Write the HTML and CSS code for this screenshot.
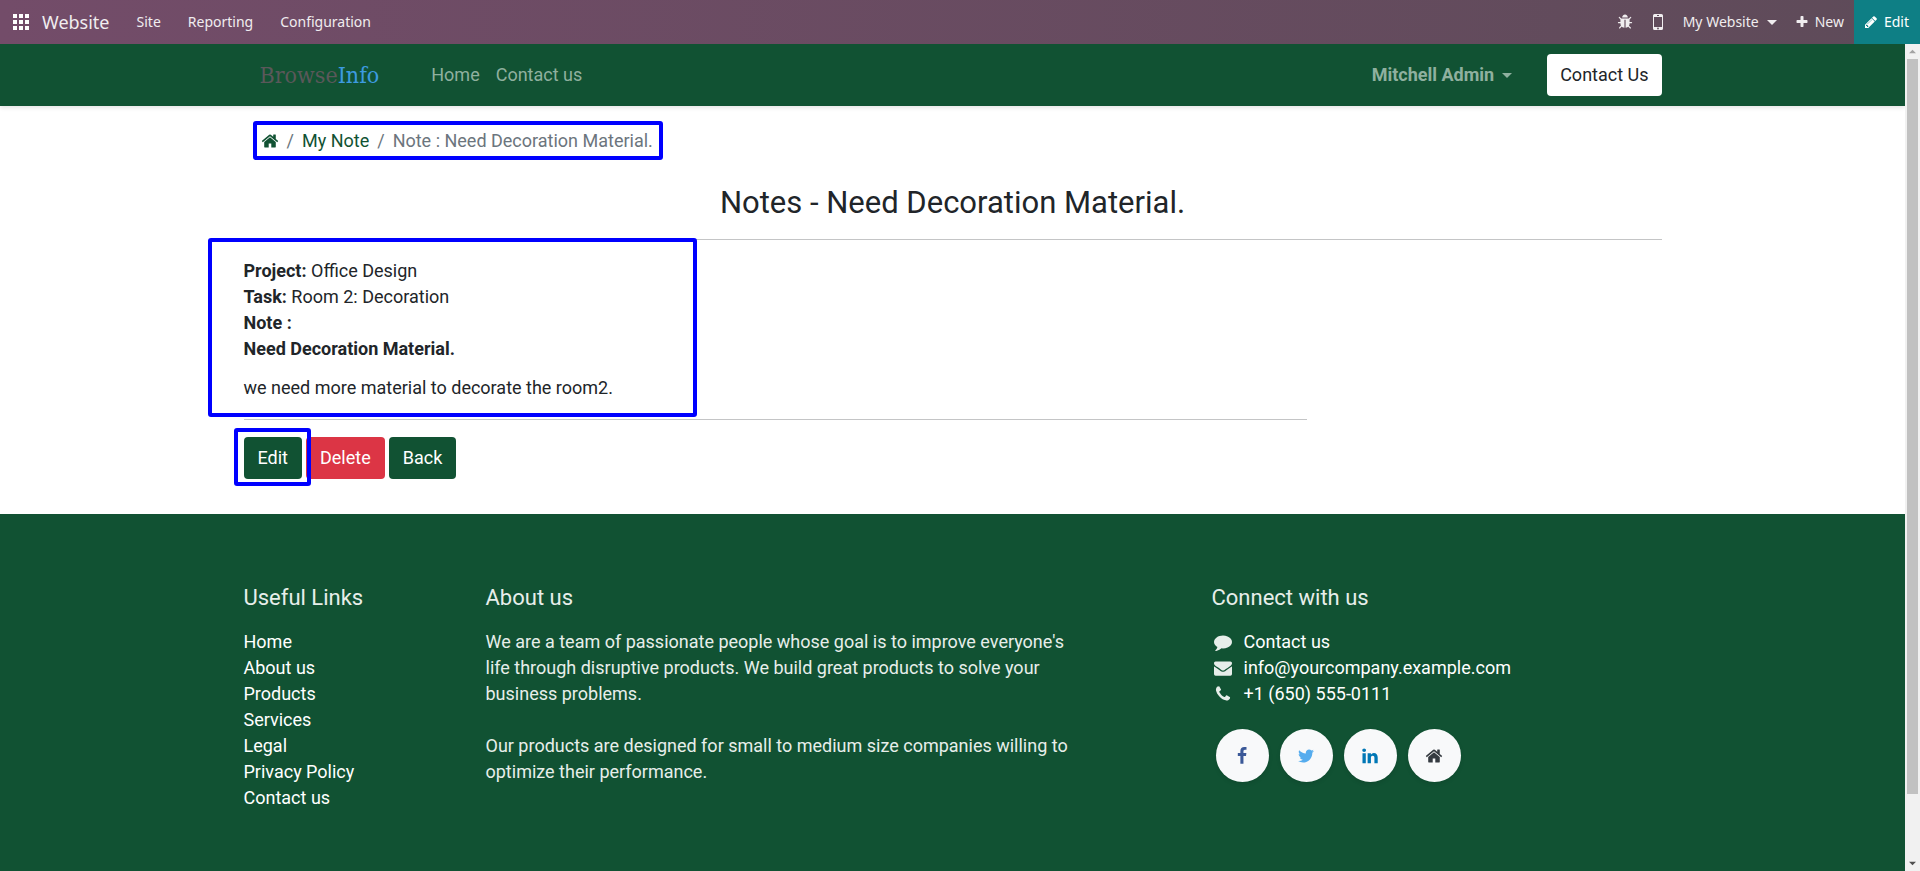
FILE: index.html
```html
<!DOCTYPE html>
<html lang="en">
<head>
<meta charset="utf-8">
<title>Note : Need Decoration Material. | My Website</title>
<link rel="stylesheet" href="styles.css">
</head>
<body>
<svg class="sprite" aria-hidden="true">
  <symbol id="home" viewBox="0 0 1792 1792"><path d="M1472 992v480q0 26-19 45t-45 19h-384v-384h-256v384h-384q-26 0-45-19t-19-45v-480q0-1 .5-3t.5-3l575-474 575 474q1 2 1 6zm223-69l-62 74q-8 9-21 11h-3q-13 0-21-7l-692-577-692 577q-12 8-24 7-13-2-21-11l-62-74q-8-10-7-23.5t11-21.5l719-599q32-26 76-26t76 26l244 204v-195q0-14 9-23t23-9h192q14 0 23 9t9 23v408l219 182q10 8 11 21.5t-7 23.5z"/></symbol>
  <symbol id="bug" viewBox="0 0 1792 1792"><path d="M1696 960q0 26-19 45t-45 19h-224q0 171-67 290l208 209q19 19 19 45t-19 45q-18 19-45 19t-45-19l-198-197q-5 5-15 13t-42 28.5-65 36.5-82 29-97 13v-896h-128v896q-51 0-101.5-13.5t-87-33-66-39-43.5-32.5l-15-14-183 207q-20 21-48 21-24 0-43-16-19-18-20.5-44.5t15.5-46.5l202-227q-58-114-58-274h-224q-26 0-45-19t-19-45 19-45 45-19h224v-294l-173-173q-19-19-19-45t19-45 45-19 45 19l173 173h844l173-173q19-19 45-19t45 19 19 45-19 45l-173 173v294h224q26 0 45 19t19 45zm-480-576h-640q0-133 93.5-226.5t226.5-93.5 226.5 93.5 93.5 226.5z"/></symbol>
  <symbol id="plus" viewBox="0 0 1792 1792"><path d="M1600 736v192q0 40-28 68t-68 28h-416v416q0 40-28 68t-68 28h-192q-40 0-68-28t-28-68v-416h-416q-40 0-68-28t-28-68v-192q0-40 28-68t68-28h416v-416q0-40 28-68t68-28h192q40 0 68 28t28 68v416h416q40 0 68 28t28 68z"/></symbol>
  <symbol id="pencil" viewBox="0 0 1792 1792"><path d="M491 1536l91-91-235-235-91 91v107h128v128h107zm523-928q0-22-22-22-10 0-17 7l-542 542q-7 7-7 17 0 22 22 22 10 0 17-7l542-542q7-7 7-17zm-54-192l416 416-832 832h-416v-416zm683 96q0 53-37 90l-166 166-416-416 166-165q36-38 90-38 53 0 91 38l235 234q37 39 37 91z"/></symbol>
  <symbol id="comment" viewBox="0 0 1792 1792"><path d="M1792 896q0 174-120 321.5t-326 233-450 85.5q-70 0-145-8-198 175-460 242-49 14-114 22-17 2-30.5-9t-17.5-29v-1q-3-4-.5-12t2-10 4.5-9.5l6-9 7-8.5 8-9q7-8 31-34.5t34.5-38 31-39.5 32.5-51 27-59 26-76q-157-89-247.5-220t-90.5-281q0-130 71-248.5t191-204.5 286-136.5 348-50.5q244 0 450 85.5t326 233 120 321.5z"/></symbol>
  <symbol id="envelope" viewBox="0 0 1792 1792"><path d="M1792 710v794q0 66-47 113t-113 47h-1472q-66 0-113-47t-47-113v-794q44 49 101 87 362 246 497 345 57 42 92.5 65.5t94.5 48 110 24.5h2q51 0 110-24.5t94.5-48 92.5-65.5q170-123 498-345 57-39 100-87zm0-294q0 79-49 151t-122 123q-376 261-468 325-10 7-42.5 31t-54 38.5-52 32.5-57.5 27-50 9h-2q-23 0-50-9t-57.5-27-52-32.5-54-38.5-42.5-31q-91-64-262-182.5t-205-142.5q-62-42-117-115.5t-55-136.5q0-78 41.5-130t118.5-52h1472q65 0 112.5 47t47.5 113z"/></symbol>
  <symbol id="phone" viewBox="0 0 1792 1792"><path d="M1600 1240q0 27-10 70.5t-21 68.5q-21 50-122 106-94 51-186 51-27 0-53-3.5t-57.5-12.5-47-14.5-55.5-20.5-49-18q-98-35-175-83-127-79-264-216t-216-264q-48-77-83-175-3-9-18-49t-20.5-55.5-14.5-47-12.5-57.5-3.5-53q0-92 51-186 56-101 106-122 25-11 68.5-21t70.5-10q14 0 21 3 18 6 53 76 11 19 30 54t35 63.5 31 53.5q3 4 17.5 25t21.5 35.5 7 28.5q0 20-28.5 50t-62 55-62 53-28.5 46q0 9 5 22.5t8.5 20.5 14 24 11.5 19q76 137 174 235t235 174q2 1 19 11.5t24 14 20.5 8.5 22.5 5q18 0 46-28.5t53-62 55-62 50-28.5q14 0 28.5 7t35.5 21.5 25 17.5q25 15 53.5 31t63.5 35 54 30q70 35 76 53 3 7 3 21z"/></symbol>
  <symbol id="facebook" viewBox="0 0 1792 1792"><path d="M1343 12v264h-157q-86 0-116 36t-30 108v189h293l-39 296h-254v759h-306v-759h-255v-296h255v-218q0-186 104-288.5t277-102.5q147 0 228 12z"/></symbol>
  <symbol id="twitter" viewBox="0 0 1792 1792"><path d="M1684 408q-67 98-162 167 1 14 1 42 0 130-38 259.5t-115.5 248.5-184.5 210.5-258 146-323 54.5q-271 0-496-145 35 4 78 4 225 0 401-138-105-2-188-64.5t-114-159.5q33 5 61 5 43 0 85-11-112-23-185.5-111.5t-73.5-205.5v-4q68 38 146 41-66-44-105-115t-39-154q0-88 44-163 121 149 294.5 238.5t371.5 99.5q-8-38-8-74 0-134 94.5-228.5t228.5-94.5q140 0 236 102 109-21 205-78-37 115-142 178 93-10 186-50z"/></symbol>
  <symbol id="linkedin" viewBox="0 0 1792 1792"><path d="M477 625v991h-330v-991h330zm21-306q1 73-50.5 122t-135.5 49h-2q-82 0-132-49t-50-122q0-74 51.5-122.5t134.5-48.5 133 48.5 51 122.5zm1166 729v568h-329v-530q0-105-40.5-164.5t-126.5-59.5q-63 0-105.5 34.5t-63.5 85.5q-11 30-11 81v553h-329q2-399 2-647t-1-296l-1-48h329v144h-2q20-32 41-56t56.5-52 87-43.5 114.5-15.5q171 0 275 113.5t104 332.5z"/></symbol>
  <symbol id="apps" viewBox="0 0 16 16"><path d="M0 0h4v4H0zM6 0h4v4H6zM12 0h4v4h-4zM0 6h4v4H0zM6 6h4v4H6zM12 6h4v4h-4zM0 12h4v4H0zM6 12h4v4H6zM12 12h4v4h-4z"/></symbol>
  <symbol id="mobile" viewBox="0 0 10 16"><path fill-rule="evenodd" d="M1.500 0h7A1.500 1.500 0 0 1 10 1.500v13a1.500 1.500 0 0 1-1.500 1.500h-7A1.500 1.500 0 0 1 0 14.500v-13A1.500 1.500 0 0 1 1.500 0zM1 3v10h8V3zM4 1v1h2V1zM5 13.600a.9.9 0 1 0 0 1.800.9.9 0 0 0 0-1.800z"/></symbol>
  <symbol id="caret" viewBox="0 0 10 5"><path d="M0 0h10L5 5z"/></symbol>
</svg>

<header class="topbar">
  <button class="topbar-item apps" aria-label="Apps"><svg class="icon-apps"><use href="#apps"/></svg></button>
  <a class="topbar-brand" href="#">Website</a>
  <nav class="topbar-menu">
    <a href="#">Site</a>
    <a href="#">Reporting</a>
    <a href="#">Configuration</a>
  </nav>
  <div class="topbar-tools">
    <button class="topbar-item bug" aria-label="Debug"><svg class="icon-bug"><use href="#bug"/></svg></button>
    <button class="topbar-item mobile" aria-label="Mobile preview"><svg class="icon-mobile"><use href="#mobile"/></svg></button>
    <button class="topbar-item site">My Website <svg class="caret"><use href="#caret"/></svg></button>
    <button class="topbar-item new"><svg class="icon-small"><use href="#plus"/></svg> New</button>
    <button class="topbar-item edit"><svg class="icon-small"><use href="#pencil"/></svg> Edit</button>
  </div>
</header>

<div class="viewport">
  <div class="page">
    <div class="navbar">
      <div class="container navbar-row">
        <a class="logo" href="#">Browse<span class="logo-info">Info</span></a>
        <nav class="navbar-links">
          <a href="#">Home</a>
          <a href="#">Contact us</a>
        </nav>
        <button class="user">Mitchell Admin <svg class="caret"><use href="#caret"/></svg></button>
        <a class="btn btn-light" href="#">Contact Us</a>
      </div>
    </div>

    <main class="container">
      <ol class="breadcrumb marked">
        <li><a href="#" aria-label="Home"><svg class="icon"><use href="#home"/></svg></a></li>
        <li><a href="#">My Note</a></li>
        <li class="current">Note : Need Decoration Material.</li>
      </ol>
      <h1 class="title">Notes - Need Decoration Material.</h1>
      <hr class="rule">
      <section class="note marked">
        <p><strong>Project:</strong> Office Design</p>
        <p><strong>Task:</strong> Room 2: Decoration</p>
        <p><strong>Note :</strong></p>
        <p><strong>Need Decoration Material.</strong></p>
        <p class="note-body">we need more material to decorate the room2.</p>
      </section>
      <hr class="rule rule-short">
      <div class="actions">
        <span class="edit-action marked"><button class="btn btn-primary">Edit</button></span>
        <button class="btn btn-danger">Delete</button>
        <button class="btn btn-primary">Back</button>
      </div>
    </main>

    <footer class="footer">
      <div class="container footer-grid">
        <section class="col-links">
          <h2>Useful Links</h2>
          <ul>
            <li><a href="#">Home</a></li>
            <li><a href="#">About us</a></li>
            <li><a href="#">Products</a></li>
            <li><a href="#">Services</a></li>
            <li><a href="#">Legal</a></li>
            <li><a href="#">Privacy Policy</a></li>
            <li><a href="#">Contact us</a></li>
          </ul>
        </section>
        <section class="col-about">
          <h2>About us</h2>
          <p>We are a team of passionate people whose goal is to improve everyone's life through disruptive products. We build great products to solve your business problems.<br><br>Our products are designed for small to medium size companies willing to optimize their performance.</p>
        </section>
        <section class="col-connect">
          <h2>Connect with us</h2>
          <ul class="contacts">
            <li><svg class="icon-contact"><use href="#comment"/></svg><a href="#">Contact us</a></li>
            <li><svg class="icon-contact"><use href="#envelope"/></svg><a href="#">info@yourcompany.example.com</a></li>
            <li><svg class="icon-contact"><use href="#phone"/></svg><a href="#">+1 (650) 555-0111</a></li>
          </ul>
          <div class="socials">
            <a class="social facebook" href="#" aria-label="Facebook"><svg class="icon"><use href="#facebook"/></svg></a>
            <a class="social twitter" href="#" aria-label="Twitter"><svg class="icon"><use href="#twitter"/></svg></a>
            <a class="social linkedin" href="#" aria-label="LinkedIn"><svg class="icon"><use href="#linkedin"/></svg></a>
            <a class="social house" href="#" aria-label="Home"><svg class="icon"><use href="#home"/></svg></a>
          </div>
        </section>
      </div>
    </footer>
  </div>

  <div class="scrollbar" aria-hidden="true">
    <svg class="arrow arrow-up"><use href="#caret"/></svg>
    <div class="thumb"></div>
    <svg class="arrow"><use href="#caret"/></svg>
  </div>
</div>
</body>
</html>
```

FILE: styles.css
```css
*, *::before, *::after { box-sizing: border-box; }

body {
  margin: 0;
  height: 100vh;
  display: flex;
  flex-direction: column;
  font: 18px/26px Roboto, "Liberation Sans", sans-serif;
  color: #212529;
  background: #fff;
}

a { color: inherit; text-decoration: none; }
button { font: inherit; color: inherit; background: none; border: 0; padding: 0; cursor: pointer; }
ul, ol { list-style: none; margin: 0; padding: 0; }
p { margin: 0; }
svg { fill: currentColor; display: block; flex: none; }
.sprite { position: absolute; width: 0; height: 0; }
.icon { width: 18px; height: 18px; }
.caret { width: 10px; height: 5px; }

/* Backend bar */
.topbar {
  flex: none;
  display: flex;
  align-items: stretch;
  height: 44px;
  padding-left: 13px;
  font: 14px/20px "Noto Sans", "Open Sans", sans-serif;
  color: #f0edef;
  background: linear-gradient(90deg, #734c69, #5e4b59);
}
.topbar-item { display: flex; align-items: center; gap: 8px; }
.icon-apps { width: 16px; height: 16px; color: #fff; }
.topbar-brand { align-self: center; margin-left: 13px; font-size: 18px; }
.topbar-menu { display: flex; align-items: center; gap: 27px; margin-left: 27px; }
.topbar-tools { display: flex; margin-left: auto; }
.icon-bug { width: 16px; height: 16px; }
.icon-mobile { width: 10px; height: 16px; }
.icon-small { width: 14px; height: 14px; }
.mobile { margin-left: 20px; }
.site { margin-left: 20px; }
.new { margin: 0 10px 0 18px; gap: 6px; }
.edit { gap: 6px; padding: 0 11px 0 10px; color: #fff; background: #0e7f85; }

/* Website frame */
.viewport { flex: 1; min-height: 0; display: flex; }
.page { flex: 1; min-width: 0; display: flex; flex-direction: column; overflow: hidden; }
.container { width: 100%; max-width: 1452px; margin: 0 auto; padding: 0 17px; }

.scrollbar {
  flex: none;
  width: 15px;
  display: flex;
  flex-direction: column;
  align-items: center;
  gap: 5px;
  padding: 5px 0;
  background: #f1f1f1;
}
.arrow { width: 7px; height: 5px; color: #505050; }
.arrow-up { transform: rotate(180deg); color: #a3a3a3; }
.thumb { width: 11px; height: 90%; background: #c1c1c1; }
.scrollbar .arrow:last-child { margin-top: auto; }

/* Navbar */
.navbar {
  flex: none;
  position: relative;
  color: #8fb09f;
  background: #115233;
  box-shadow: 0 2px 4px rgba(0, 0, 0, .1);
}
.navbar-row { display: flex; align-items: center; height: 62px; }
.logo {
  margin-left: 16px;
  font: 23px/30px "DejaVu Serif Condensed", "DejaVu Serif", serif;
  color: #5a585a;
}
.logo-info { color: #3d9be0; }
.navbar-links { display: flex; gap: 16px; margin-left: 52px; }
.user { display: flex; align-items: center; gap: 8px; margin-left: auto; font-weight: 700; }

.btn {
  display: inline-block;
  padding: 8px 14px;
  line-height: 26px;
  border-radius: 4px;
  color: #fff;
}
.btn-light { margin-left: 35px; padding: 8px 13px; color: #212529; background: #fff; }
.btn-primary { background: #115233; }
.btn-danger { background: #dc3545; }

/* Blue highlight frames laid over the content */
.marked { position: relative; }
.marked::after {
  content: "";
  position: absolute;
  border: 4px solid #00f;
  border-radius: 3px;
  pointer-events: none;
  z-index: 1;
}
.breadcrumb::after { inset: -7px -10px -6px -8px; }
.note::after { inset: -19px auto 2px -36px; width: 489px; }
.edit-action::after { inset: -9px -9px -7px -10px; }

/* Note page */
.breadcrumb { display: flex; width: fit-content; margin: 22px 0 0 17px; color: #115233; }
.breadcrumb li { display: flex; align-items: center; }
.breadcrumb li + li::before { content: "/"; padding: 0 8px; color: #6c757d; }
.breadcrumb .current { color: #6c757d; }
.title { margin: 29px 0 17px; font-size: 31px; line-height: 39px; font-weight: 400; text-align: center; }
.rule { height: 1px; margin: 0; border: 0; background: #c4c5c6; }
.rule-short { width: 75%; }
.note { padding: 1px 0 18px; margin-top: 17px; }
.note-body { margin-top: 13px; }
.actions { display: flex; gap: 4px; margin: 17px 0 35px; }

/* Footer */
.footer { flex: 1 0 auto; padding: 71px 0; color: #e7eeea; background: #115233; }
.footer-grid { display: grid; grid-template-columns: repeat(12, minmax(0, 1fr)); padding: 0; }
.footer-grid section { padding-left: 17px; }
.footer a { color: #fff; }
.footer h2 { margin: 0 0 18px; font-size: 22px; line-height: 26px; font-weight: 400; }
.col-links { grid-column: span 2; }
.col-about { grid-column: span 5; }
.col-connect { grid-column: 9 / span 4; }
.contacts li { display: flex; align-items: center; gap: 12px; }
.icon-contact { width: 18px; height: 18px; margin-left: 2px; }
.socials { display: flex; gap: 11px; margin: 22px 0 0 4px; }
.footer .social {
  display: grid;
  place-items: center;
  width: 53px;
  height: 53px;
  border-radius: 50%;
  background: #f8f9fa;
  box-shadow: 0 2px 4px rgba(0, 0, 0, .1);
}
.footer .facebook { color: #3b5998; }
.footer .twitter { color: #55acee; }
.footer .linkedin { color: #0077b5; }
.footer .house { color: #343a40; }
```
